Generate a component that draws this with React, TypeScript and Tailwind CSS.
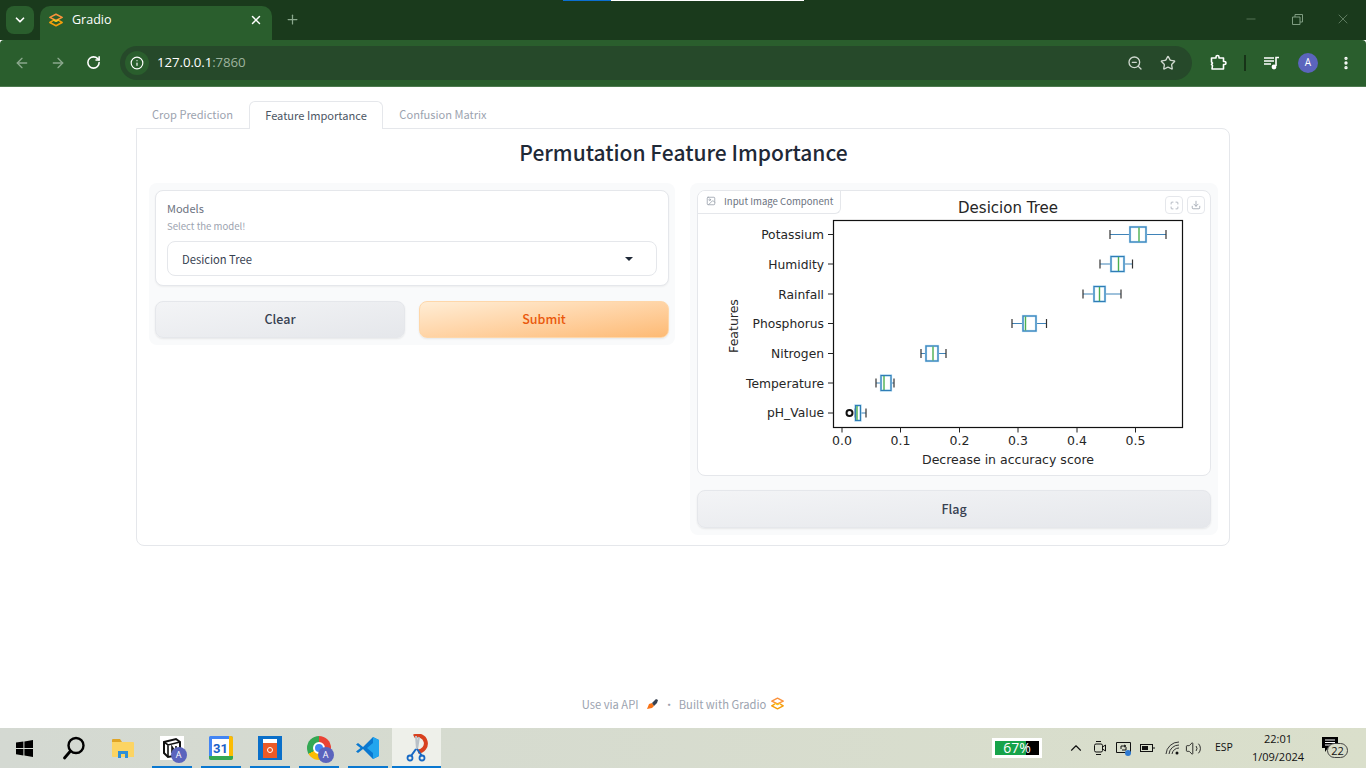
import {
  ArrowLeft,
  ArrowRight,
  ChevronDown,
  ChevronUp,
  Download,
  EllipsisVertical,
  Image,
  Info,
  Maximize,
  Minus,
  Plus,
  RotateCw,
  Star,
  Volume2,
  X,
  ZoomOut,
} from "lucide-react";

function GradioLogo({ size = 14 }: { size?: number }) {
  return (
    <svg width={size} height={size} viewBox="0 0 16 16" fill="none" strokeLinejoin="round" strokeLinecap="round">
      <path d="M8 1.5 15 5 8 8.5 1 5Z" stroke="#fb923c" strokeWidth="1.8" />
      <path d="M5 8 8 9.5 11 8" stroke="#facc15" strokeWidth="1.6" />
      <path d="M1 10.8 8 14.5 15 10.8 12 9M1 10.8 4 9" stroke="#f59e0b" strokeWidth="1.8" />
    </svg>
  );
}

function AvatarBadge() {
  return (
    <span className="absolute -bottom-[3px] -right-[3px] flex h-[16px] w-[16px] items-center justify-center rounded-full bg-[#5b64bd] text-[9px] text-white">
      A
    </span>
  );
}

function BrowserChrome() {
  return (
    <header className="relative shrink-0 font-['Open_Sans','Noto_Sans',sans-serif] text-white">
      <div className="absolute left-[563px] top-0 flex h-px">
        <div className="w-[48px] bg-[#0b6fd0]" />
        <div className="w-[193px] bg-white" />
      </div>
      <div className="flex h-[40px] items-end bg-[#1a3a1c] pl-[6px]">
        <div className="mb-[6px] flex h-[28px] w-[28px] items-center justify-center rounded-lg bg-[#2a5e2d]">
          <ChevronDown size={14} strokeWidth={3} />
        </div>
        <div className="ml-[6px] flex h-[34px] w-[232px] items-center rounded-t-[10px] bg-[#2a5e2d] pb-[6px] pl-[9px] pr-[9px]">
          <GradioLogo />
          <span className="ml-[9px] flex-1 text-[12.5px]">Gradio</span>
          <X size={14} strokeWidth={2.5} />
        </div>
        <div className="mb-[13px] ml-[13px] text-[#8ba88d]">
          <Plus size={15} strokeWidth={2} />
        </div>
        <div className="mb-[13px] ml-auto flex w-[138px] items-center text-[#7f9c81]">
          <div className="flex w-[46px] justify-center">
            <Minus size={14} strokeWidth={1} />
          </div>
          <div className="flex w-[46px] justify-center">
            <svg width="11" height="11" viewBox="0 0 11 11" fill="none" stroke="currentColor">
              <path d="M.5 3h7.5v7.5H.5ZM3 3V.5h7.5V8H8" />
            </svg>
          </div>
          <div className="flex w-[46px] justify-center">
            <X size={16} strokeWidth={1} />
          </div>
        </div>
      </div>
      <div className="flex h-[47px] items-center rounded-t-[4px] border-b border-[#4d7a4f] bg-[#2a5e2d] pb-px">
        <div className="flex w-[120px] items-center pl-[14px]">
          <ArrowLeft size={16} className="text-[#8ba88d]" />
          <ArrowRight size={16} className="ml-[20px] text-[#8ba88d]" />
          <RotateCw size={15} strokeWidth={2.5} className="ml-[20px]" />
        </div>
        <div className="flex h-[34px] w-[1072px] items-center rounded-full bg-[#26492a] pl-[5px] pr-[16px]">
          <div className="flex h-[24px] w-[24px] items-center justify-center rounded-full bg-[#2a5e2d]">
            <Info size={14} />
          </div>
          <span className="ml-[8px] flex-1 text-[13.3px] tracking-[-0.1px]">
            127.0.0.1<span className="text-[#9db39e]">:7860</span>
          </span>
          <ZoomOut size={16} className="text-[#cfd8cf]" />
          <Star size={16} className="ml-[17px] text-[#cfd8cf]" />
        </div>
        <svg width="18" height="18" viewBox="0 0 18 18" fill="none" stroke="#fff" strokeWidth="1.6" strokeLinejoin="round" className="ml-[17px]">
          <path d="M2.500 4H7V3a1.500 1.500 0 0 1 3 0v1h4.500v3.500h1a1.500 1.500 0 0 1 0 3h-1V15H3l.5-3.500-1-1 1-1.500-1-1Z" />
        </svg>
        <div className="ml-[17px] h-[16px] w-[2px] bg-[#173318]" />
        <svg width="16" height="14" viewBox="0 0 16 14" className="ml-[18px]" fill="none" stroke="#fff" strokeWidth="1.400">
          <path d="M0 2h10M0 5h10M0 8h7" />
          <path d="M12 10V1.500h3" strokeWidth="1.600" />
          <circle cx="10" cy="11" r="2.400" fill="#fff" stroke="none" />
        </svg>
        <div className="ml-[18px] flex h-[20px] w-[20px] items-center justify-center rounded-full bg-[#5b64bd] text-[10px]">
          A
        </div>
        <EllipsisVertical size={16} strokeWidth={3} className="ml-[20px]" />
      </div>
    </header>
  );
}

const boxes = [
  { name: "Potassium", y: 234.5, ly: 239, lo: 1110, q1: 1130, med: 1139, q3: 1146, hi: 1166 },
  { name: "Humidity", y: 264, ly: 269, lo: 1100, q1: 1111, med: 1118.5, q3: 1124, hi: 1132.5 },
  { name: "Rainfall", y: 294, ly: 299, lo: 1083, q1: 1094, med: 1099.5, q3: 1105, hi: 1121 },
  { name: "Phosphorus", y: 323.5, ly: 328, lo: 1012, q1: 1023, med: 1025.5, q3: 1036, hi: 1046.5 },
  { name: "Nitrogen", y: 353.5, ly: 358, lo: 921, q1: 926, med: 933, q3: 938, hi: 946 },
  { name: "Temperature", y: 383, ly: 388, lo: 876, q1: 881, med: 884, q3: 891, hi: 894 },
  { name: "pH_Value", y: 413, ly: 417, lo: 855, q1: 855.5, med: 857, q3: 860.5, hi: 866 },
];

const ticks = [
  { label: "0.0", x: 842 },
  { label: "0.1", x: 900.5 },
  { label: "0.2", x: 959.5 },
  { label: "0.3", x: 1018 },
  { label: "0.4", x: 1077 },
  { label: "0.5", x: 1135.5 },
];

function Chart() {
  return (
    <svg
      width="514"
      height="286"
      viewBox="697 190 514 286"
      className="block font-['DejaVu_Sans',sans-serif]"
      fill="#262626"
    >
      <text x="1008" y="212.5" fontSize="15" textAnchor="middle">
        Desicion Tree
      </text>
      <rect x="833.5" y="220.5" width="349" height="207" fill="white" stroke="#111" strokeWidth="1.2" />
      {boxes.map((b) => (
        <g key={b.name}>
          <path d={`M828 ${b.y}h5.5`} stroke="#222" />
          <text x="824" y={b.ly} fontSize="12.3" textAnchor="end">
            {b.name}
          </text>
          <path
            d={`M${b.lo} ${b.y}H${b.q1}M${b.q3} ${b.y}H${b.hi}`}
            stroke="#3f83b8"
            strokeWidth="1.2"
          />
          <path d={`M${b.lo} ${b.y - 4.5}v9M${b.hi} ${b.y - 4.5}v9`} stroke="#333" strokeWidth="1.2" />
          <rect
            x={b.q1}
            y={b.y - 7.5}
            width={b.q3 - b.q1}
            height="15"
            fill="white"
            stroke="#9ccbea"
            strokeWidth="2.2"
          />
          <rect
            x={b.q1}
            y={b.y - 7.5}
            width={b.q3 - b.q1}
            height="15"
            fill="none"
            stroke="#2f7db5"
            strokeWidth="1"
          />
          <path d={`M${b.med} ${b.y - 7}v14`} stroke="#4caf50" strokeWidth="1.4" />
        </g>
      ))}
      <circle cx="849.5" cy="413" r="3" fill="none" stroke="#111" strokeWidth="2" />
      {ticks.map((t) => (
        <g key={t.label}>
          <path d={`M${t.x} 427.5v5`} stroke="#222" />
          <text x={t.x} y="445" fontSize="12.5" textAnchor="middle">
            {t.label}
          </text>
        </g>
      ))}
      <text x="1008" y="464" fontSize="12.5" textAnchor="middle">
        Decrease in accuracy score
      </text>
      <text transform="translate(737.5 326) rotate(-90)" fontSize="12.5" textAnchor="middle">
        Features
      </text>
    </svg>
  );
}

function GrayButton({ children, className }: { children: string; className: string }) {
  return (
    <button
      className={
        "rounded-lg border border-[#e5e7eb] bg-gradient-to-br from-[#f3f4f6] to-[#e5e7eb] text-[12.5px] font-medium text-[#374151] shadow-[0_1px_2px_rgba(0,0,0,0.08)] " +
        className
      }
    >
      {children}
    </button>
  );
}

function GradioApp() {
  return (
    <main className="flex flex-1 flex-col bg-white font-['Noto_Sans_CJK_SC','Noto_Sans',sans-serif]">
      <div className="ml-[136px] mt-[14px] w-[1094px]">
        <div className="flex h-[27px] text-[11.1px] text-[#9ca3af]">
          <div className="flex w-[113px] items-center justify-center">Crop Prediction</div>
          <div className="relative z-10 -mb-px flex w-[134px] items-center justify-center rounded-t-md border border-b-0 border-[#e5e7eb] bg-white pb-px text-[#4b5563]">
            Feature Importance
          </div>
          <div className="flex w-[120px] items-center justify-center">Confusion Matrix</div>
        </div>
        <div className="h-[418px] rounded-b-lg rounded-tr-lg border border-[#e5e7eb] pl-[12px] pr-[11px]">
          <h1 className="mt-[7px] h-[47px] text-center text-[21px] font-medium leading-[32px] text-[#1f2937]">
            Permutation Feature Importance
          </h1>
          <div className="flex items-start gap-[15px]">
            <section className="flex w-[526px] flex-col gap-[15px] rounded-lg bg-[#f9fafb] px-[6px] py-[7px]">
              <div className="h-[96px] rounded-lg border border-[#e5e7eb] bg-white px-[11px] pt-[10px] shadow-[0_1px_2px_rgba(0,0,0,0.05)]">
                <div className="text-[11px] leading-[15px] text-[#6b7280]">Models</div>
                <div className="mt-[3px] text-[9.6px] leading-[14px] text-[#9ca3af]">Select the model!</div>
                <div className="mt-[8px] flex h-[35px] items-center justify-between rounded-lg border border-[#e5e7eb] pl-[14px] pr-[23px] pt-px text-[11.2px] text-[#374151]">
                  Desicion Tree
                  <span className="h-0 w-0 border-x-[4px] border-t-[4px] border-x-transparent border-t-[#1f2937]" />
                </div>
              </div>
              <div className="flex gap-[14px]">
                <GrayButton className="h-[37px] flex-1">Clear</GrayButton>
                <button className="h-[37px] flex-1 rounded-lg border border-[#fed7aa] bg-gradient-to-br from-[#ffedd5] to-[#fdba74] text-[12.5px] font-medium text-[#ea580c] shadow-[0_1px_2px_rgba(0,0,0,0.08)]">
                  Submit
                </button>
              </div>
            </section>
            <section className="flex w-[528px] flex-col gap-[14px] rounded-lg bg-[#f9fafb] px-[7px] py-[7px]">
              <div className="relative h-[286px] overflow-hidden rounded-lg border border-[#e5e7eb] bg-white">
                <div className="absolute -left-px -top-px">
                  <Chart />
                </div>
                <div className="absolute left-0 top-0 flex h-[23px] w-[143px] items-center gap-[8px] whitespace-nowrap rounded-br-md border-b border-r border-[#e5e7eb] bg-white pb-[2px] pl-[8px] text-[9.6px] text-[#6b7280]">
                  <Image size={10} className="shrink-0 text-[#9ca3af]" />
                  Input Image Component
                </div>
                <div className="absolute right-[5px] top-[5px] flex gap-[4px] text-[#9ca3af]">
                  <span className="flex h-[18px] w-[18px] items-center justify-center rounded-[4px] border border-[#e5e7eb]">
                    <Maximize size={9} />
                  </span>
                  <span className="flex h-[18px] w-[18px] items-center justify-center rounded-[4px] border border-[#e5e7eb]">
                    <Download size={10} />
                  </span>
                </div>
              </div>
              <GrayButton className="h-[38px] w-full">Flag</GrayButton>
            </section>
          </div>
        </div>
      </div>
      <footer className="mt-auto flex h-[48px] items-start justify-center pt-[15px] text-[11.2px] leading-[18px] text-[#9ca3af]">
        <span>Use via API</span>
        <svg width="14" height="14" viewBox="0 0 14 14" className="ml-[6px] mt-[2px]">
          <path d="M2 12 4 7l3-1 2 3-2 2Z" fill="#f97316" />
          <path d="m7 6 4-4 2 1-1 3-3 3Z" fill="#374151" />
        </svg>
        <span className="ml-[5px] mr-[4px]">·</span>
        <span>Built with Gradio</span>
        <span className="ml-[5px] mt-[2px]">
          <GradioLogo size={13} />
        </span>
      </footer>
    </main>
  );
}

function TaskItem({ children, line, active }: { children: React.ReactNode; line?: boolean; active?: boolean }) {
  return (
    <div className={"relative flex h-full w-[49px] items-center justify-center " + (active ? "bg-[#eef0ea]" : "")}>
      {children}
      {line && (
        <span
          className={
            "absolute bottom-0 h-[2px] bg-[#0a78d0] " + (active ? "inset-x-0" : "left-[5px] right-[4px]")
          }
        />
      )}
    </div>
  );
}

function Taskbar() {
  return (
    <footer className="flex h-[40px] shrink-0 items-center bg-gradient-to-r from-[#d4d9d2] to-[#dadfcb] font-['Open_Sans','Noto_Sans',sans-serif] text-[#111]">
      <TaskItem>
        <svg width="17" height="17" viewBox="0 0 17 17" fill="#000">
          <path d="M0 2.6 7.4 1.5v6.4H0ZM8.4 1.4 17 0v7.9H8.4ZM0 9h7.4v6.4L0 14.3ZM8.4 9H17v8l-8.600-1.400Z" />
        </svg>
      </TaskItem>
      <TaskItem>
        <svg width="24" height="24" viewBox="0 0 24 24" fill="none" stroke="#000" strokeWidth="2.4">
          <circle cx="14" cy="9.5" r="7.5" />
          <path d="M8.5 15 2.5 22" strokeLinecap="round" strokeWidth="2.8" />
        </svg>
      </TaskItem>
      <TaskItem>
        <svg width="22" height="20" viewBox="0 0 22 20">
          <path d="M0 2a1 1 0 0 1 1-1h7l2 3H0Z" fill="#e0a526" />
          <path d="M0 4h21a1 1 0 0 1 1 1v14H1a1 1 0 0 1-1-1Z" fill="#fcd463" />
          <path d="M6 20v-7h10v7h-3v-4H9v4Z" fill="#2f8fd8" />
        </svg>
      </TaskItem>
      <TaskItem line>
        <div className="relative h-[24px] w-[24px] bg-white">
          <svg width="24" height="24" viewBox="0 0 24 24" fill="none" stroke="#111" strokeWidth="2">
            <path d="M4 6 16 3l4 3v13l-12 2-4-4Z" />
            <path d="M4 6l4 3 12-3M8 9v12M12 17v-6l4 6v-7" strokeWidth="1.6" />
          </svg>
          <AvatarBadge />
        </div>
      </TaskItem>
      <TaskItem line>
        <div className="relative h-[24px] w-[24px] overflow-hidden rounded-[2px] bg-white">
          <div className="absolute inset-x-0 top-0 h-[3px] bg-[#4285f4]" />
          <div className="absolute inset-y-0 left-0 w-[3px] bg-[#4285f4]" />
          <div className="absolute inset-y-0 right-0 w-[4px] bg-[#fbbc04]" />
          <div className="absolute inset-x-0 bottom-0 h-[4px] bg-[#34a853]" />
          <div className="absolute inset-0 flex items-center justify-center font-['Roboto',sans-serif] text-[13px] font-bold leading-none text-[#1a5fc8]">
            31
          </div>
        </div>
      </TaskItem>
      <TaskItem line>
        <div className="flex h-[24px] w-[24px] items-center justify-center bg-[#0a6fc9]">
          <div className="flex h-[19px] w-[14px] items-end bg-white">
            <div className="flex h-[15px] w-full items-center justify-center bg-[#ec5a28]">
              <span className="h-[6px] w-[6px] rounded-full border border-white" />
            </div>
          </div>
        </div>
      </TaskItem>
      <TaskItem line>
        <div className="relative h-[24px] w-[24px]">
          <div className="h-full w-full rounded-full bg-[conic-gradient(#ea4335_0deg_120deg,#fbbc04_120deg_240deg,#34a853_240deg_360deg)]" />
          <div className="absolute left-[6px] top-[6px] h-[12px] w-[12px] rounded-full border-2 border-white bg-[#4285f4]" />
          <AvatarBadge />
        </div>
      </TaskItem>
      <TaskItem line>
        <svg width="24" height="24" viewBox="0 0 24 24">
          <path d="M17 1 23 4v16l-6 3L7 13l-5 4-2-1.5L4.500 12 0 8.500 2 7l5 4Z" fill="#0a78d0" />
          <path d="M17 1 23 4v16l-6 3Zm0 6-6 5 6 5Z" fill="#22a5ee" />
        </svg>
      </TaskItem>
      <TaskItem line active>
        <svg width="24" height="28" viewBox="0 0 24 28" fill="none">
          <path d="M9 2.500a8 8 0 1 1 4 15" stroke="#d8411f" strokeWidth="4" />
          <path d="M11 2l1 13M14 3l-2 12" stroke="#b9c0c7" strokeWidth="2" />
          <path d="M11 15 6 22M12 15l5 7" stroke="#1769c4" strokeWidth="2" />
          <circle cx="5" cy="24" r="2.500" stroke="#1769c4" strokeWidth="1.800" />
          <circle cx="17" cy="24" r="2.500" stroke="#1769c4" strokeWidth="1.800" />
        </svg>
      </TaskItem>

      <div className="ml-auto flex h-full items-center">
        <div className="flex h-[20px] w-[50px] items-center border-[3px] border-white bg-black">
          <div className="flex h-full w-[31px] shrink-0 items-center bg-[#16a34a]" />
          <span className="-ml-[31px] w-[44px] text-center text-[14px] leading-none text-white">67%</span>
        </div>
        <ChevronUp size={18} strokeWidth={1.5} className="ml-[25px]" />
        <svg width="14" height="18" viewBox="0 0 14 18" fill="none" stroke="#111" className="ml-[8px]">
          <rect x="1.500" y="5" width="8" height="8" rx="1.500" />
          <path d="m9.500 8 3-2v6l-3-2M3 2.500h5M3 15.500h5" />
        </svg>
        <svg width="17" height="16" viewBox="0 0 17 16" className="ml-[8px]">
          <path d="M1.500 2.500h14v10h-14Z" fill="none" stroke="#111" />
          <path d="M6 9V6h4M9 5l2 1-2 1M11 7v3H7" fill="none" stroke="#111" />
          <circle cx="13" cy="13" r="3" fill="#2f7ad1" />
        </svg>
        <svg width="15" height="10" viewBox="0 0 15 10" fill="none" stroke="#111" className="ml-[8px]">
          <rect x=".5" y="1.500" width="12" height="7" />
          <rect x="2" y="3" width="6" height="4" fill="#111" stroke="none" />
          <path d="M14 4v2" />
        </svg>
        <svg width="16" height="14" viewBox="0 0 16 14" fill="none" stroke="#333" className="ml-[10px]">
          <path d="M1 13a13 13 0 0 1 13-12M4 13a10 10 0 0 1 10-9M7 13a7 7 0 0 1 7-6" />
          <circle cx="12" cy="12" r="1.500" fill="#111" stroke="none" />
        </svg>
        <Volume2 size={17} strokeWidth={1.2} className="ml-[4px]" />
        <span className="ml-[13px] w-[24px] text-[10.5px]">ESP</span>
        <div className="ml-[8px] w-[62px] text-center text-[11px] leading-[18px]">
          <div>22:01</div>
          <div>1/09/2024</div>
        </div>
        <div className="relative ml-[13px] mr-[18px] h-[22px] w-[26px]">
          <svg width="16" height="15" viewBox="0 0 16 15" className="absolute left-0 top-0">
            <path d="M0 0h16v11H6l-3 4v-4H0Z" fill="#000" />
            <path d="M3 3h10M3 5.500h10M3 8h10" stroke="#fff" />
          </svg>
          <span className="absolute right-0 top-[6px] flex h-[15px] w-[21px] items-center justify-center rounded-full border border-[#444] bg-[#d9ddc9] text-[11px] leading-none">
            22
          </span>
        </div>
      </div>
    </footer>
  );
}

export default function App() {
  return (
    <div className="flex h-[768px] w-[1366px] flex-col overflow-hidden bg-white">
      <BrowserChrome />
      <GradioApp />
      <Taskbar />
    </div>
  );
}
